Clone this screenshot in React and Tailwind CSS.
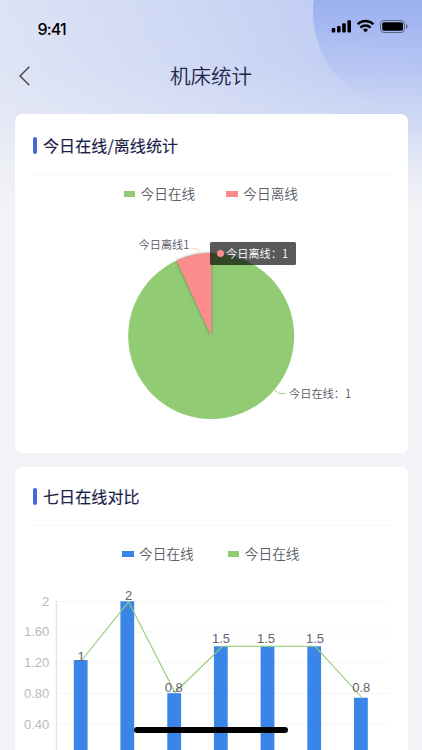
const gridLabels = [
  { label: '2', y: 601.5 },
  { label: '1.60', y: 632 },
  { label: '1.20', y: 662.5 },
  { label: '0.80', y: 693.5 },
  { label: '0.40', y: 724.5 },
];

const bars = [
  { x: 80.7, y: 660, value: '1', labelX: 81, labelY: 660.5 },
  { x: 127.3, y: 601.3, value: '2', labelX: 128.5, labelY: 599.5 },
  { x: 174.2, y: 693.2, value: '0.8', labelX: 173.8, labelY: 692 },
  { x: 220.8, y: 646.3, value: '1.5', labelX: 221, labelY: 643 },
  { x: 267.5, y: 646.3, value: '1.5', labelX: 266, labelY: 643 },
  { x: 314.2, y: 646.3, value: '1.5', labelX: 315, labelY: 643 },
  { x: 360.9, y: 697.7, value: '0.8', labelX: 361.3, labelY: 692 },
];

const linePoints = '82,660 128.5,601.8 175,692.5 222.5,646.3 315,646.3 361.5,697';

function StatusBar() {
  return (
    <div className="flex h-[54px] items-start justify-between pl-[37.5px] pr-[14px]">
      <span className="mt-[17px] font-['Inter'] text-[16px] leading-[24px] font-medium tracking-[-0.8px] text-black">
        9:41
      </span>
      <svg width="77" height="15" viewBox="0 0 77 15" className="mt-[19px]">
        <g fill="#000">
          <rect x="0.7" y="9" width="3.6" height="4.4" rx="1" />
          <rect x="6" y="7" width="3.6" height="6.4" rx="1" />
          <rect x="11.2" y="4.3" width="3.6" height="9.1" rx="1" />
          <rect x="16.4" y="1.3" width="3.6" height="12.1" rx="1" />
        </g>
        <g fill="none" stroke="#000" strokeWidth="2.3">
          <path d="M26.6 5.2a11.3 11.3 0 0 1 15.8 0" />
          <path d="M29.4 8.6a7.3 7.3 0 0 1 10.2 0" />
        </g>
        <path d="M34.5 13.4l-2.5-2.6a3.6 3.6 0 0 1 5 0z" fill="#000" />
        <rect x="49.5" y="1.5" width="24" height="12" rx="3.6" fill="none" stroke="#000" strokeOpacity="0.45" />
        <rect x="51.2" y="3.2" width="20.8" height="8.6" rx="1.8" fill="#000" />
        <path d="M75 5.2c1.1.4 1.7 1.2 1.7 2.3s-.6 1.9-1.7 2.3z" fill="#000" fillOpacity="0.45" />
      </svg>
    </div>
  );
}

function NavBar() {
  return (
    <div className="relative flex h-[60px] items-start justify-center">
      <svg width="12" height="20" viewBox="0 0 12 20" className="absolute top-[11.5px] left-[19px]">
        <path d="M10.3 0.7L1 10l9.3 9.3" fill="none" stroke="#46484f" strokeWidth="1.5" />
      </svg>
      <h1 className="mt-[6px] text-[20.5px] leading-[30px] font-[350] text-[#1f2747]">机床统计</h1>
    </div>
  );
}

function CardHeader({ title, className }) {
  return (
    <div className={`mr-[17.5px] ml-[17.5px] flex items-center border-b border-[#f5f6f8] ${className}`}>
      <span className="ml-[0.5px] h-[17px] w-[4.5px] rounded-full bg-[#4566dc]" />
      <h2 className="ml-[6px] text-[16px] leading-[24px] font-normal tracking-[0.1px] text-[#1a2148] [-webkit-text-stroke:0.15px_#1a2148]">
        {title}
      </h2>
    </div>
  );
}

function Legend({ items, className }) {
  return (
    <div className={`flex items-center ${className}`}>
      {items.map((item, index) => (
        <div key={index} className="flex items-center gap-[5.5px]">
          <span className={`h-[6px] w-[11.5px] ${item.color}`} />
          <span className="-mt-px text-[13.7px] leading-[20px] font-[350] text-[#5a5e68]">{item.label}</span>
        </div>
      ))}
    </div>
  );
}

function PieChart() {
  return (
    <div className="relative">
      <svg width="393" height="249" viewBox="15 204 393 249" className="block font-[350]">
        <defs>
          <filter id="sliceShadow" x="-40%" y="-20%" width="180%" height="140%">
            <feDropShadow dx="0" dy="0" stdDeviation="1.8" floodColor="#000" floodOpacity="0.45" />
          </filter>
        </defs>
        <circle cx="211.2" cy="336" r="83" fill="#91cb74" />
        <path
          d="M211.2 336L176.6 260.6A83 83 0 0 1 211.2 253Z"
          fill="#fb8b8d"
          filter="url(#sliceShadow)"
        />
        <path d="M191.5 248.8h6.5l1.3 5" fill="none" stroke="#fac8a0" strokeWidth="0.8" />
        <path d="M274.5 390l4.5 3.5h7" fill="none" stroke="#91cb74" strokeWidth="0.8" />
        <text x="138.5" y="249" fontSize="11.2" fill="#555964">今日离线1</text>
        <text x="289" y="398" fontSize="11.2" fill="#555964">今日在线：1</text>
      </svg>
      <div className="absolute top-[38px] left-[195.5px] flex h-[22.5px] w-[86px] items-center rounded-[1.5px] bg-black/65 pl-[7px]">
        <span className="size-[7px] shrink-0 rounded-full bg-[#fb8b8d]" />
        <span className="ml-[2px] text-[11.2px] font-[350] whitespace-nowrap text-white">今日离线：1</span>
      </div>
    </div>
  );
}

function BarChart() {
  return (
    <svg width="393" height="186" viewBox="15 564 393 186" className="block">
      {gridLabels.map((row) => (
        <g key={row.label}>
          <line x1="56" x2="389" y1={row.y} y2={row.y} stroke="#f4f5f7" strokeWidth="1" />
          <text
            x="49.3"
            y={row.y + 4.3}
            textAnchor="end"
            fontSize="13"
            fill="#b9b9bd"
            className="font-['Liberation_Sans']"
          >
            {row.label}
          </text>
        </g>
      ))}
      <line x1="56.3" x2="56.3" y1="601" y2="750" stroke="#dcdcdf" strokeWidth="1" />
      {bars.map((bar) => (
        <rect key={bar.x} x={bar.x - 6.9} y={bar.y} width="13.8" height={750 - bar.y} fill="#3a86e8" />
      ))}
      <polyline points={linePoints} fill="none" stroke="#91cb74" strokeWidth="1.1" />
      {bars.map((bar) => (
        <text
          key={bar.x}
          x={bar.labelX}
          y={bar.labelY}
          textAnchor="middle"
          fontSize="13"
          fill="#62656f"
          className="font-['Liberation_Sans']"
        >
          {bar.value}
        </text>
      ))}
    </svg>
  );
}

export default function App() {
  return (
    <div className="relative h-[750px] w-[422px] overflow-hidden bg-[#f2f3f6] font-['Noto_Sans_CJK_SC',sans-serif]">
      {/* Header backdrop */}
      <div className="absolute inset-x-0 top-0 h-[210px] overflow-hidden bg-[linear-gradient(90deg,#dde3f5_0%,#ccd6f4_50%,#bfccf3_80%,#bccaf3_100%)] [mask-image:linear-gradient(180deg,#000_0%,rgba(0,0,0,0.95)_30%,rgba(0,0,0,0.7)_55%,rgba(0,0,0,0.2)_80%,transparent_100%)]">
        <div className="absolute top-[-86px] left-[313px] size-[196px] rounded-full bg-[linear-gradient(180deg,#9bb0f0_45%,rgba(155,176,240,0.45)_72%,rgba(155,176,240,0)_100%)]" />
      </div>

      <div className="relative">
        <StatusBar />
        <NavBar />

        <div className="flex flex-col gap-[14px] pr-[14.5px] pl-[14.5px]">
          <section className="h-[339px] overflow-hidden rounded-[7px] bg-white">
            <CardHeader title="今日在线/离线统计" className="h-[61px] pt-[2px]" />
            <Legend
              className="mt-[9px] gap-[31px] pl-[109px]"
              items={[
                { label: '今日在线', color: 'bg-[#91cb74]' },
                { label: '今日离线', color: 'bg-[#fb8b8d]' },
              ]}
            />
            <div className="mt-px">
              <PieChart />
            </div>
          </section>

          <section className="h-[340px] overflow-hidden rounded-t-[7px] bg-white">
            <CardHeader title="七日在线对比" className="h-[59px]" />
            <Legend
              className="mt-[18px] mb-[1px] gap-[34px] pl-[107.5px]"
              items={[
                { label: '今日在线', color: 'bg-[#3a86e8]' },
                { label: '今日在线', color: 'bg-[#91cb74]' },
              ]}
            />
            <BarChart />
          </section>
        </div>
      </div>

      {/* Home indicator */}
      <div className="absolute top-[727.3px] left-[134px] h-[6px] w-[154px] rounded-full bg-black" />
    </div>
  );
}
